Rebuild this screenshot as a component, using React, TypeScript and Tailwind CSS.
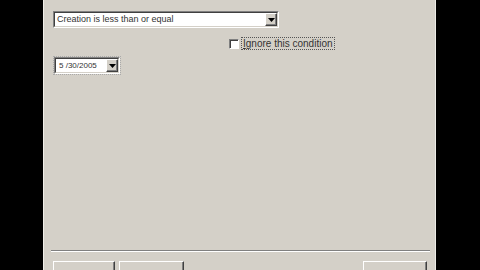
function Arrow() {
  return (
    <svg width="7" height="4" viewBox="0 0 7 4" className="block">
      <path d="M0 0h7L3.5 4z" fill="#000" />
    </svg>
  );
}

function DropButton() {
  return (
    <div className="flex h-full w-[12px] shrink-0 items-center justify-center border border-t-white border-l-white border-r-[#404040] border-b-[#404040] bg-[#d4d0c8] shadow-[inset_-1px_-1px_0_#808080]">
      <Arrow />
    </div>
  );
}

function Sunken({className, children}: {className: string; children: React.ReactNode}) {
  return (
    <div className={`border border-t-[#808080] border-l-[#808080] border-r-white border-b-white ${className}`}>
      <div className="flex h-full items-stretch border border-t-[#404040] border-l-[#404040] border-r-[#d4d0c8] border-b-[#d4d0c8] bg-white">
        {children}
      </div>
    </div>
  );
}

function Button({label, className}: {label: string; className: string}) {
  return (
    <div className={`flex h-[23px] justify-center border border-t-white border-l-white border-r-[#404040] border-b-[#404040] pt-[6px] shadow-[inset_-1px_-1px_0_#808080] ${className}`}>
      {label}
    </div>
  );
}

export default function App() {
  return (
    <div className="flex h-[270px] w-[480px] overflow-hidden bg-black font-['Liberation_Sans',Arial,sans-serif] text-[9px] text-black">
      <div className="w-[43px] shrink-0" />
      <div className="flex w-[393px] shrink-0 flex-col border-l border-r border-l-[#f0eee8] border-r-[#ecebe6] bg-[#d4d0c8] pl-[9px] pr-[7px]">
        <Sunken className="mt-[11px] h-[17px] w-[226px]">
          <div className="flex-1 whitespace-nowrap pl-[2px] leading-[13px] text-[#333]">Creation is less than or equal</div>
          <DropButton />
        </Sunken>
        <div className="mt-[9px] flex items-center pl-[176px]">
          <div className="h-[10px] w-[10px] border border-t-[#808080] border-l-[#808080] border-r-white border-b-white bg-white shadow-[inset_1px_1px_0_#404040]" />
          <div className="ml-[2px] whitespace-nowrap border border-dotted border-[#555] px-[1px] text-[10px] leading-[11px] text-[#333]">
            <span className="underline">I</span>gnore this condition
          </div>
        </div>
        <div className="mt-[6px] w-[68px] border border-dotted border-[#aaa]">
          <Sunken className="h-[17px] w-[66px]">
            <div className="flex-1 whitespace-nowrap pl-[3px] text-[8px] leading-[13px] text-[#333]">5 /30/2005</div>
            <DropButton />
          </Sunken>
        </div>
        <div className="mx-[-2px] mt-auto border-t border-b border-t-[#808080] border-b-white" />
        <div className="mt-[9px] flex whitespace-nowrap text-[#333]">
          <Button label="Help" className="w-[62px]" />
          <Button label="Cancel" className="ml-[4px] w-[65px]" />
          <div className="flex-1" />
          <Button label="OK" className="mr-[1px] w-[64px]" />
        </div>
        <div className="mb-[-14px]" />
      </div>
    </div>
  );
}
